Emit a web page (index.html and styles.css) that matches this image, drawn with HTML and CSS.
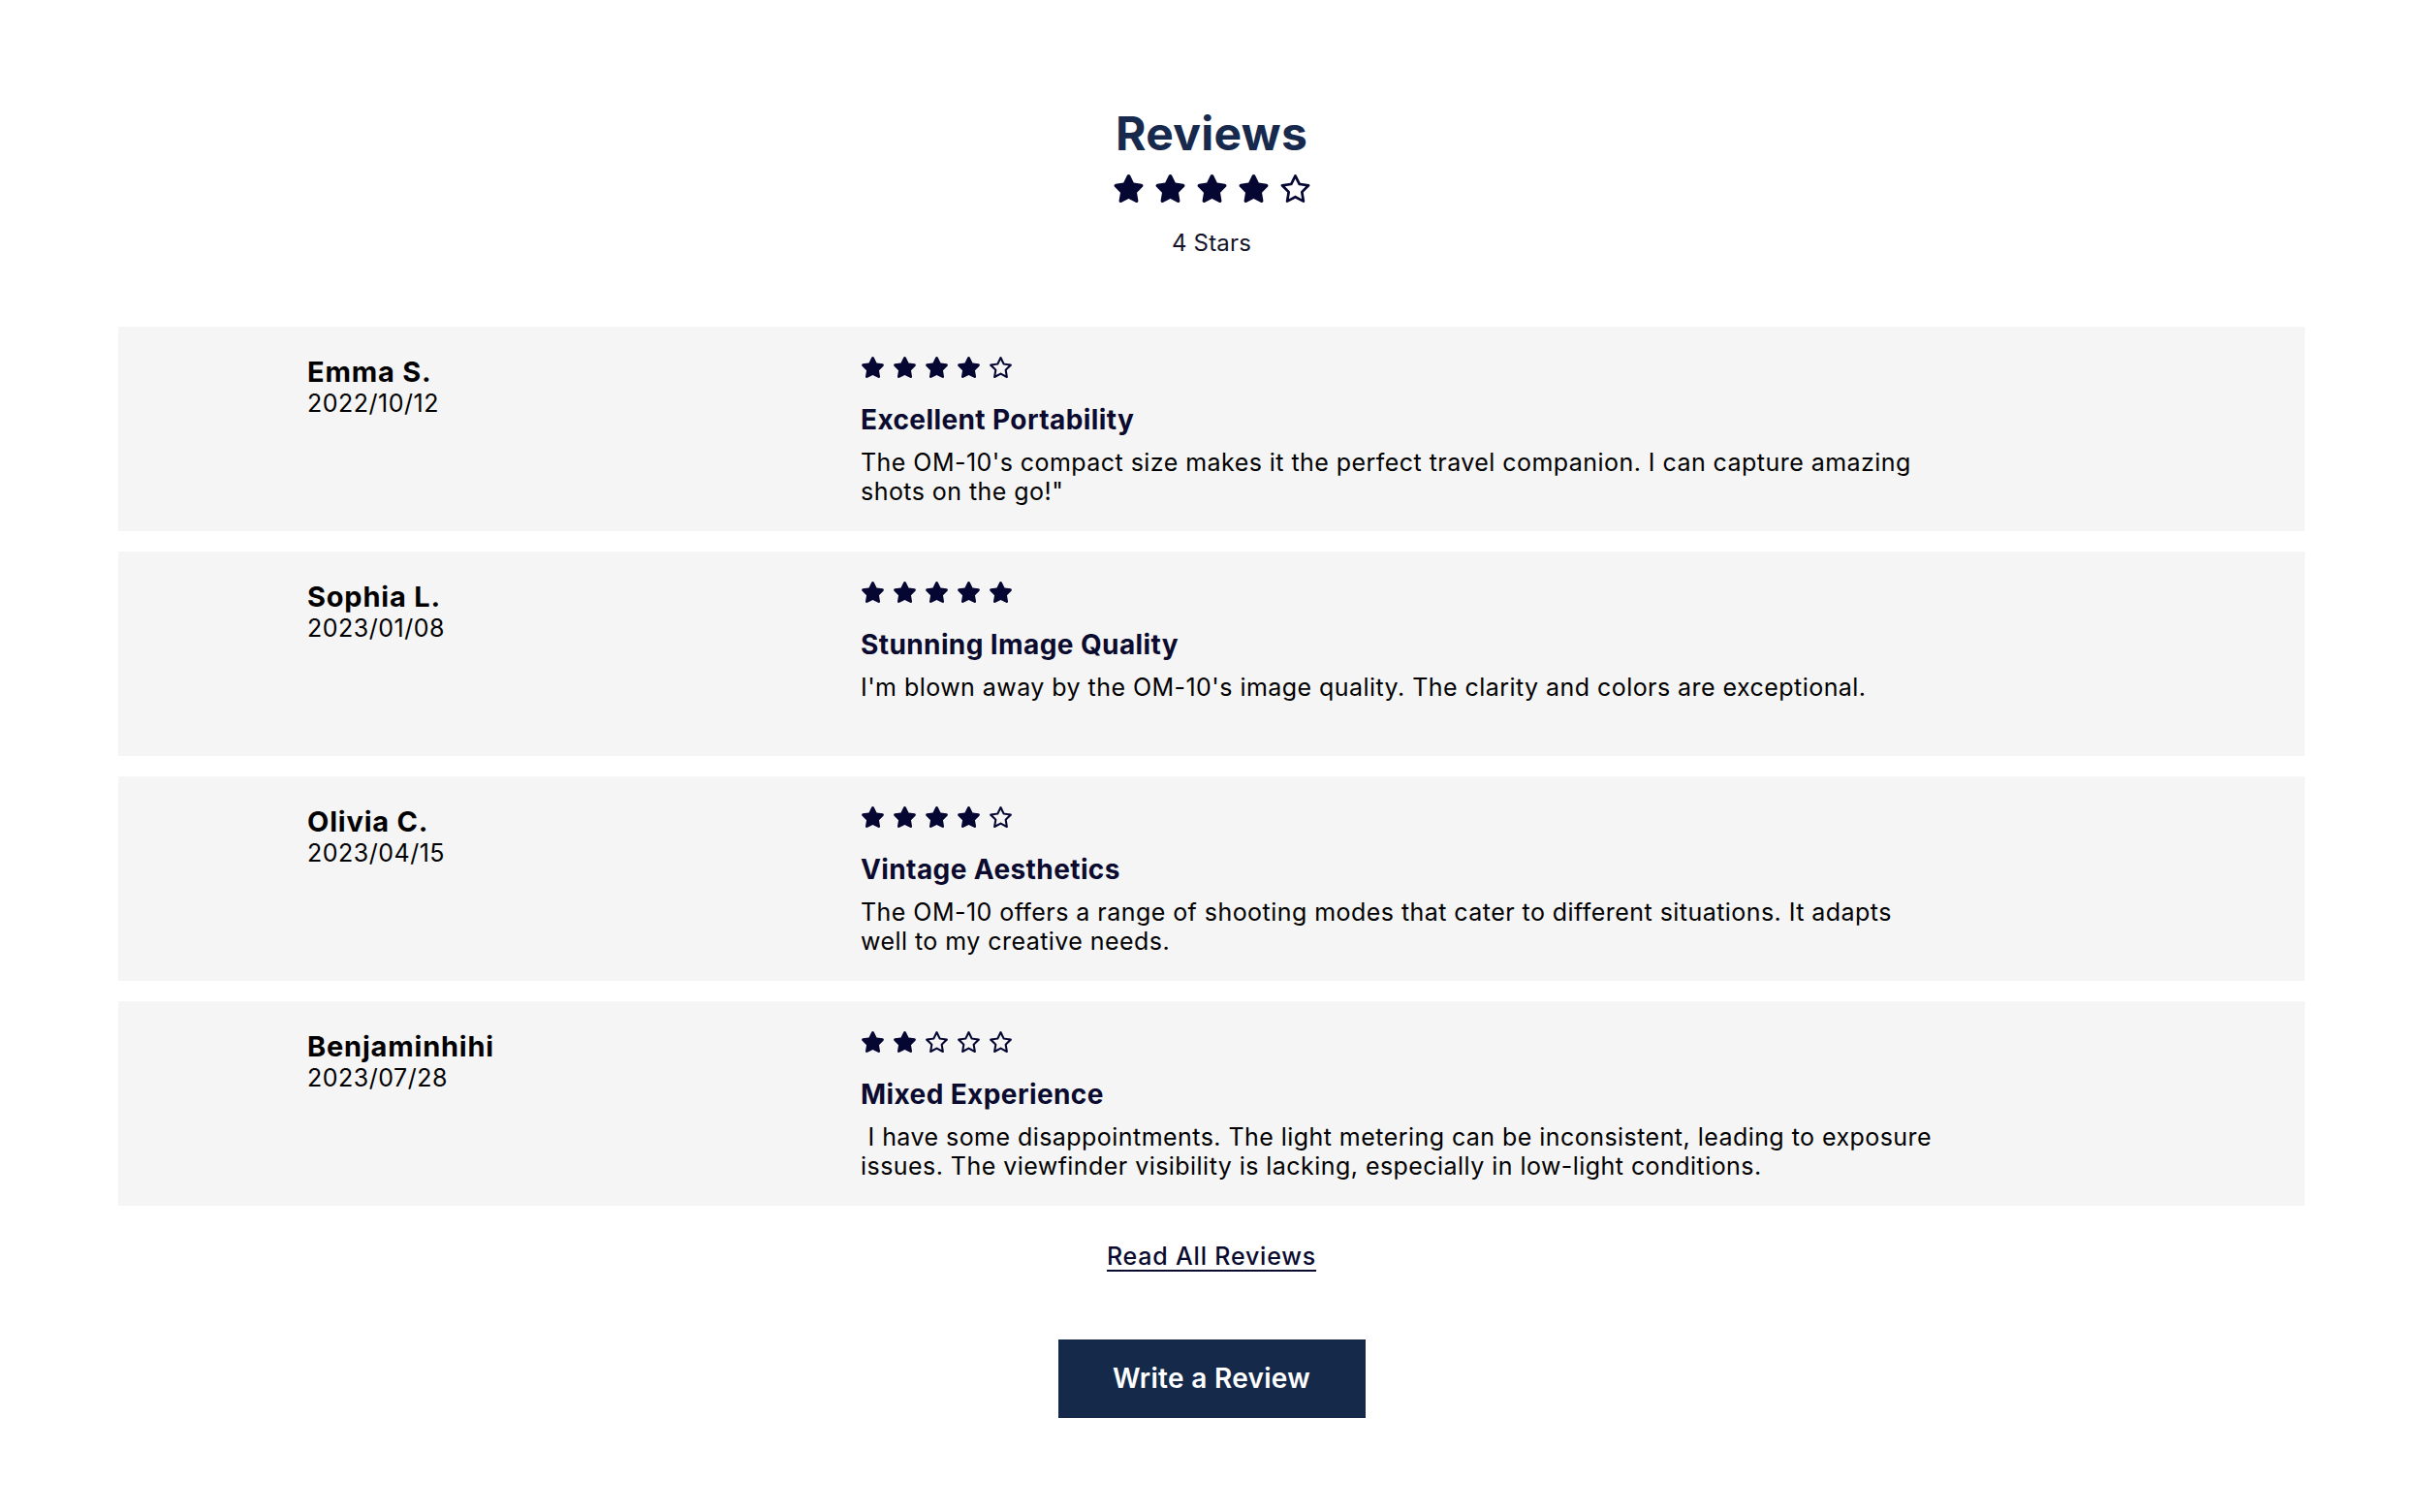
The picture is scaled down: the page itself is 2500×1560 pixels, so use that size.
FILE: index.html
```html
<!DOCTYPE html>
<html lang="en">
<head>
<meta charset="utf-8">
<title>Reviews</title>
<link rel="stylesheet" href="styles.css">
</head>
<body>
<svg width="0" height="0" class="defs" aria-hidden="true">
  <defs>
    <path id="star-full" d="M316.9 18C311.6 7 300.4 0 288.1 0s-23.4 7-28.8 18L195 150.3 51.4 171.5c-12 1.8-22 10.2-25.7 21.7s-.7 24.2 7.9 32.7L137.8 329 113.2 474.7c-2 12 3 24.2 12.9 31.3s23 8 33.8 2.3l128.3-68.5 128.3 68.5c10.8 5.7 23.9 4.9 33.8-2.3s14.9-19.3 12.9-31.3L438.5 329 542.7 225.9c8.6-8.5 11.7-21.2 7.9-32.7s-13.7-19.9-25.7-21.7L381.2 150.3 316.9 18z"/>
    <path id="star-empty" d="M287.9 0c9.2 0 17.6 5.2 21.6 13.5l68.6 141.3 153.2 22.6c9 1.3 16.5 7.6 19.3 16.3s.5 18.1-5.9 24.5L433.6 328.4l26.2 155.6c1.5 9-2.2 18.1-9.6 23.5s-17.3 6-25.3 1.7l-137-73.2L151 509.1c-8.1 4.3-17.9 3.7-25.3-1.7s-11.2-14.5-9.7-23.5l26.2-155.6L31.1 218.2c-6.5-6.4-8.7-15.9-5.9-24.5s10.3-14.9 19.3-16.3l153.2-22.6L266.3 13.5C270.4 5.2 278.7 0 287.9 0zm0 79L235.4 187.2c-3.5 7.1-10.2 12.1-18.1 13.3L99 217.9 184.9 303c5.5 5.5 8.1 13.3 6.8 21L171.4 443.7l105.2-56.2c7.1-3.8 15.6-3.8 22.6 0l105.2 56.2L384.2 324.1c-1.3-7.7 1.2-15.5 6.8-21l85.9-85.1L358.6 200.5c-7.8-1.2-14.6-6.1-18.1-13.3L287.9 79z"/>
  </defs>
</svg>

<main class="reviews">
  <header class="summary">
    <h1 class="summary-title">Reviews</h1>
    <div class="stars stars-lg">
      <svg viewBox="0 0 576 512"><use href="#star-full"/></svg>
      <svg viewBox="0 0 576 512"><use href="#star-full"/></svg>
      <svg viewBox="0 0 576 512"><use href="#star-full"/></svg>
      <svg viewBox="0 0 576 512"><use href="#star-full"/></svg>
      <svg viewBox="0 0 576 512"><use href="#star-empty"/></svg>
    </div>
    <p class="summary-count">4 Stars</p>
  </header>

  <section class="review-list">
    <article class="review">
      <div class="author">
        <div class="author-name">Emma S.</div>
        <div class="author-date">2022/10/12</div>
      </div>
      <div class="review-body">
        <div class="stars stars-sm">
          <svg viewBox="0 0 576 512"><use href="#star-full"/></svg>
          <svg viewBox="0 0 576 512"><use href="#star-full"/></svg>
          <svg viewBox="0 0 576 512"><use href="#star-full"/></svg>
          <svg viewBox="0 0 576 512"><use href="#star-full"/></svg>
          <svg viewBox="0 0 576 512"><use href="#star-empty"/></svg>
        </div>
        <h2 class="review-title">Excellent Portability</h2>
        <p class="review-text">The OM-10's compact size makes it the perfect travel companion. I can capture amazing shots on the go!"</p>
      </div>
    </article>

    <article class="review">
      <div class="author">
        <div class="author-name">Sophia L.</div>
        <div class="author-date">2023/01/08</div>
      </div>
      <div class="review-body">
        <div class="stars stars-sm">
          <svg viewBox="0 0 576 512"><use href="#star-full"/></svg>
          <svg viewBox="0 0 576 512"><use href="#star-full"/></svg>
          <svg viewBox="0 0 576 512"><use href="#star-full"/></svg>
          <svg viewBox="0 0 576 512"><use href="#star-full"/></svg>
          <svg viewBox="0 0 576 512"><use href="#star-full"/></svg>
        </div>
        <h2 class="review-title">Stunning Image Quality</h2>
        <p class="review-text">I'm blown away by the OM-10's image quality. The clarity and colors are exceptional.</p>
      </div>
    </article>

    <article class="review">
      <div class="author">
        <div class="author-name">Olivia C.</div>
        <div class="author-date">2023/04/15</div>
      </div>
      <div class="review-body">
        <div class="stars stars-sm">
          <svg viewBox="0 0 576 512"><use href="#star-full"/></svg>
          <svg viewBox="0 0 576 512"><use href="#star-full"/></svg>
          <svg viewBox="0 0 576 512"><use href="#star-full"/></svg>
          <svg viewBox="0 0 576 512"><use href="#star-full"/></svg>
          <svg viewBox="0 0 576 512"><use href="#star-empty"/></svg>
        </div>
        <h2 class="review-title">Vintage Aesthetics</h2>
        <p class="review-text">The OM-10 offers a range of shooting modes that cater to different situations. It adapts well to my creative needs.</p>
      </div>
    </article>

    <article class="review">
      <div class="author">
        <div class="author-name">Benjaminhihi</div>
        <div class="author-date">2023/07/28</div>
      </div>
      <div class="review-body">
        <div class="stars stars-sm">
          <svg viewBox="0 0 576 512"><use href="#star-full"/></svg>
          <svg viewBox="0 0 576 512"><use href="#star-full"/></svg>
          <svg viewBox="0 0 576 512"><use href="#star-empty"/></svg>
          <svg viewBox="0 0 576 512"><use href="#star-empty"/></svg>
          <svg viewBox="0 0 576 512"><use href="#star-empty"/></svg>
        </div>
        <h2 class="review-title">Mixed Experience</h2>
        <p class="review-text">&nbsp;I have some disappointments. The light metering can be inconsistent, leading to exposure issues. The viewfinder visibility is lacking, especially in low-light conditions.</p>
      </div>
    </article>
  </section>

  <footer class="actions">
    <a class="read-all" href="#">Read All Reviews</a>
    <button class="write-btn" type="button">Write a Review</button>
  </footer>
</main>
</body>
</html>
```

FILE: styles.css
```css
* {
  box-sizing: border-box;
}

html, body {
  margin: 0;
  padding: 0;
  background: #ffffff;
}

body {
  font-family: "Inter", "Noto Sans", "Liberation Sans", sans-serif;
  color: #000000;
}

.defs {
  position: absolute;
  width: 0;
  height: 0;
  overflow: hidden;
}

.reviews {
  padding: 109px 122px 0;
}

.summary {
  display: flex;
  flex-direction: column;
  align-items: center;
}

.summary-title {
  margin: 0;
  font-size: 48px;
  line-height: 1.2;
  font-weight: 700;
  letter-spacing: 0.3px;
  color: #172a4d;
}

.stars {
  display: flex;
  color: #050631;
}

.stars svg {
  display: block;
  fill: currentColor;
}

.stars-lg {
  margin-top: 13px;
  gap: 10px;
}

.stars-lg svg {
  width: 33px;
  height: 29px;
}

.summary-count {
  margin: 25px 0 0;
  font-size: 24px;
  line-height: 33px;
  letter-spacing: 0.2px;
  color: #14142b;
}

.review-list {
  margin-top: 70px;
  display: flex;
  flex-direction: column;
  gap: 21px;
}

.review {
  height: 211px;
  background: #f5f5f5;
  padding: 31px 0 0 195px;
  display: grid;
  grid-template-columns: 571px 1111px;
  align-items: start;
}

.author {
  padding-top: 1px;
}

.author-name {
  font-size: 29px;
  line-height: 30px;
  font-weight: 700;
  letter-spacing: 0.8px;
  color: #000000;
}

.author-date {
  margin-top: 2px;
  font-size: 25px;
  line-height: 30px;
  letter-spacing: 0.5px;
  color: #000000;
}

.stars-sm {
  gap: 8px;
}

.stars-sm svg {
  width: 25px;
  height: 22px;
}

.review-title {
  margin: 26px 0 0;
  font-size: 28px;
  line-height: 34px;
  font-weight: 700;
  letter-spacing: 0.4px;
  color: #0b0b30;
}

.review-text {
  margin: 12px 0 0;
  font-size: 25px;
  line-height: 30px;
  letter-spacing: 0.45px;
  color: #000000;
}

.actions {
  display: flex;
  flex-direction: column;
  align-items: center;
  padding-top: 37px;
}

.read-all {
  font-size: 25px;
  line-height: 30px;
  font-weight: 500;
  letter-spacing: 0.8px;
  color: #0b0b30;
  text-decoration: underline;
  text-decoration-thickness: 2px;
  text-underline-offset: 5px;
}

.write-btn {
  margin-top: 71px;
  width: 317px;
  height: 81px;
  border: none;
  border-radius: 0;
  background: #15294b;
  color: #ffffff;
  font-family: "Inter", "Noto Sans", "Liberation Sans", sans-serif;
  font-size: 28px;
  font-weight: 600;
  letter-spacing: 0.3px;
  cursor: pointer;
}
```
